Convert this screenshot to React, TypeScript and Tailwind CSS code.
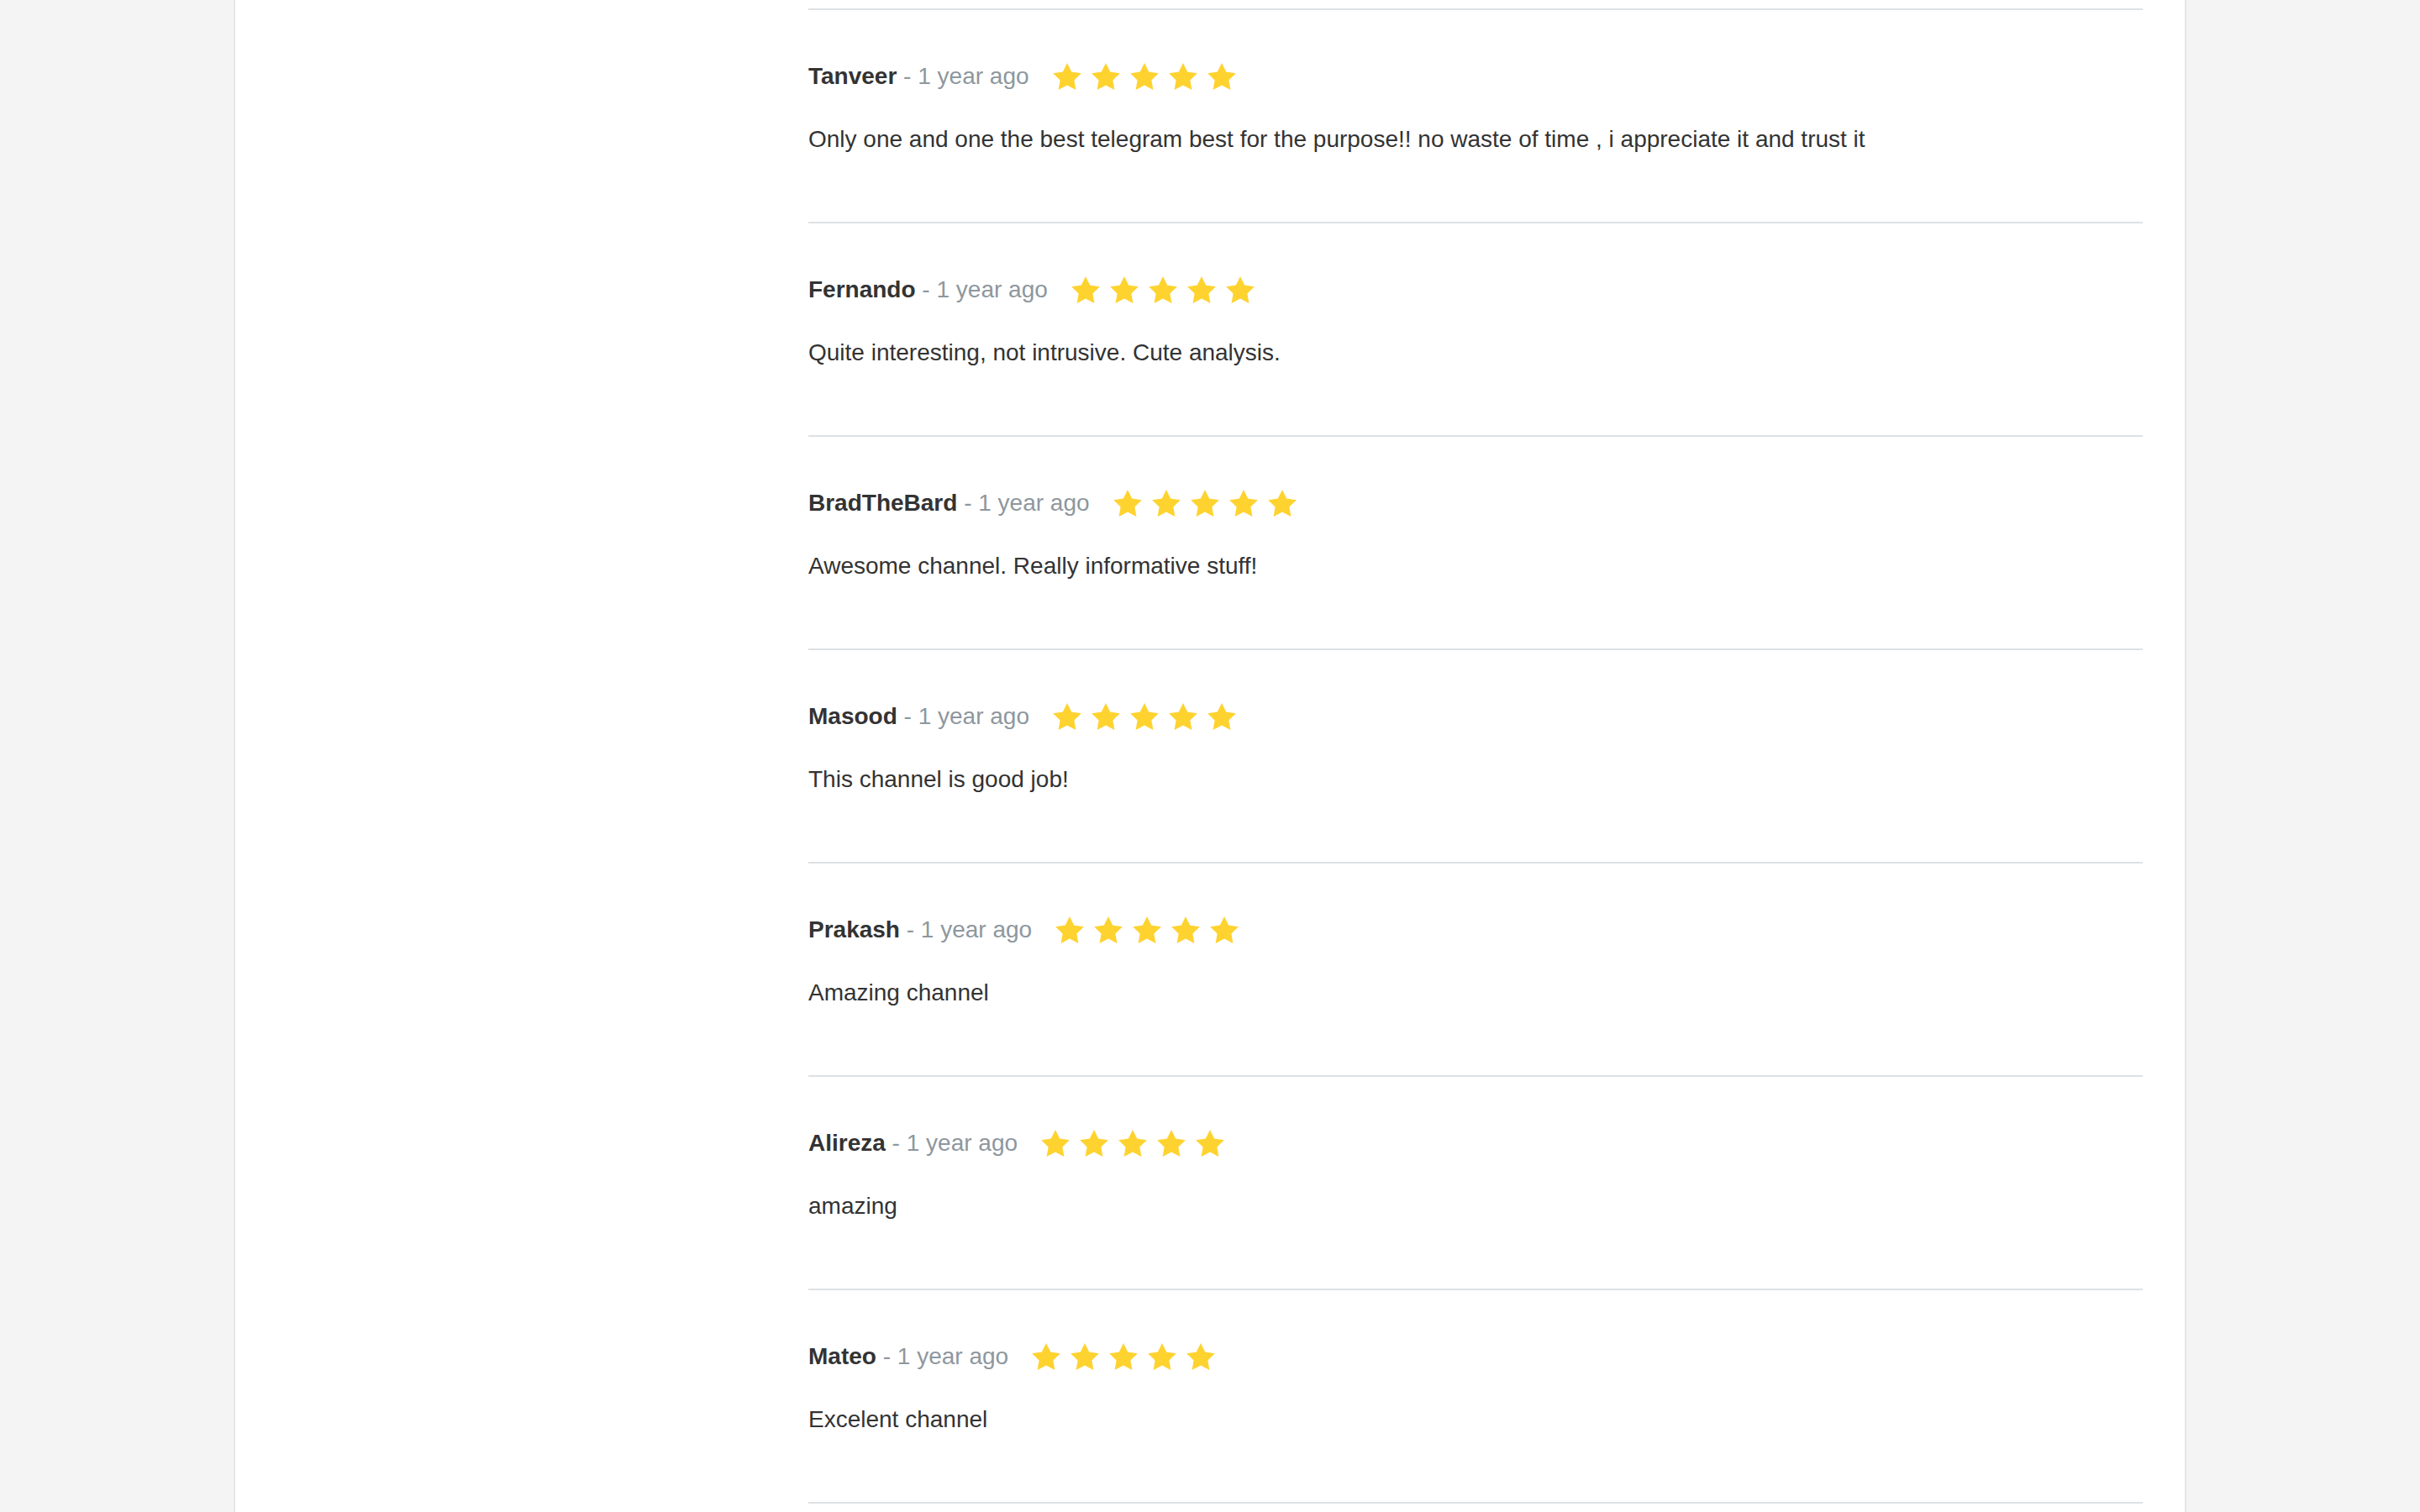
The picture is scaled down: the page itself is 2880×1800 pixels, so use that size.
import React from 'react';

interface Review {
  name: string;
  when: string;
  rating: number;
  text: string;
}

const reviews: Review[] = [
  { name: 'Tanveer', when: '1 year ago', rating: 5, text: 'Only one and one the best telegram best for the purpose!! no waste of time , i appreciate it and trust it' },
  { name: 'Fernando', when: '1 year ago', rating: 5, text: 'Quite interesting, not intrusive. Cute analysis.' },
  { name: 'BradTheBard', when: '1 year ago', rating: 5, text: 'Awesome channel. Really informative stuff!' },
  { name: 'Masood', when: '1 year ago', rating: 5, text: 'This channel is good job!' },
  { name: 'Prakash', when: '1 year ago', rating: 5, text: 'Amazing channel' },
  { name: 'Alireza', when: '1 year ago', rating: 5, text: 'amazing' },
  { name: 'Mateo', when: '1 year ago', rating: 5, text: 'Excelent channel' },
];

// five point star, fuller body like the font-icon one
const Star = () => (
  <svg viewBox="0 0 24 22.83" className="h-[32px] w-[34px] fill-[#fed330]">
    <polygon points="12,0 15.71,7.52 24,8.72 18,14.57 19.42,22.83 12,18.93 4.58,22.83 6,14.57 0,8.72 8.29,7.52" />
  </svg>
);

const Stars: React.FC<{ count: number }> = ({ count }) => (
  <div className="ml-[28px] flex items-center gap-[12px]">
    {Array.from({ length: count }).map((_, i) => (
      <Star key={i} />
    ))}
  </div>
);

const ReviewItem: React.FC<{ review: Review }> = ({ review }) => (
  <div className="border-t-2 border-[#dce1e4] pt-[59px] pb-[78px]">
    <div className="flex items-center leading-[40px]">
      <span>
        <span className="font-bold text-[#333333]">{review.name}</span>
        <span className="text-[#8e979e]"> - {review.when}</span>
      </span>
      <Stars count={review.rating} />
    </div>
    <p className="mt-[35px] leading-[40px] text-[#333333]">{review.text}</p>
  </div>
);

export default function App() {
  return (
    <div className="min-h-screen bg-[#f4f4f4] font-['Liberation_Sans',Arial,sans-serif] text-[28px]">
      <div className="mx-auto flex min-h-screen w-[2324px] border-x-2 border-[#e6e6e6] bg-white">
        <div className="w-[682px] shrink-0" />
        <div className="flex-1 pt-[10px] pr-[50px]">
          {reviews.map(r => (
            <ReviewItem key={r.name} review={r} />
          ))}
          <div className="border-t-2 border-[#dce1e4] h-[60px]" />
        </div>
      </div>
    </div>
  );
}
